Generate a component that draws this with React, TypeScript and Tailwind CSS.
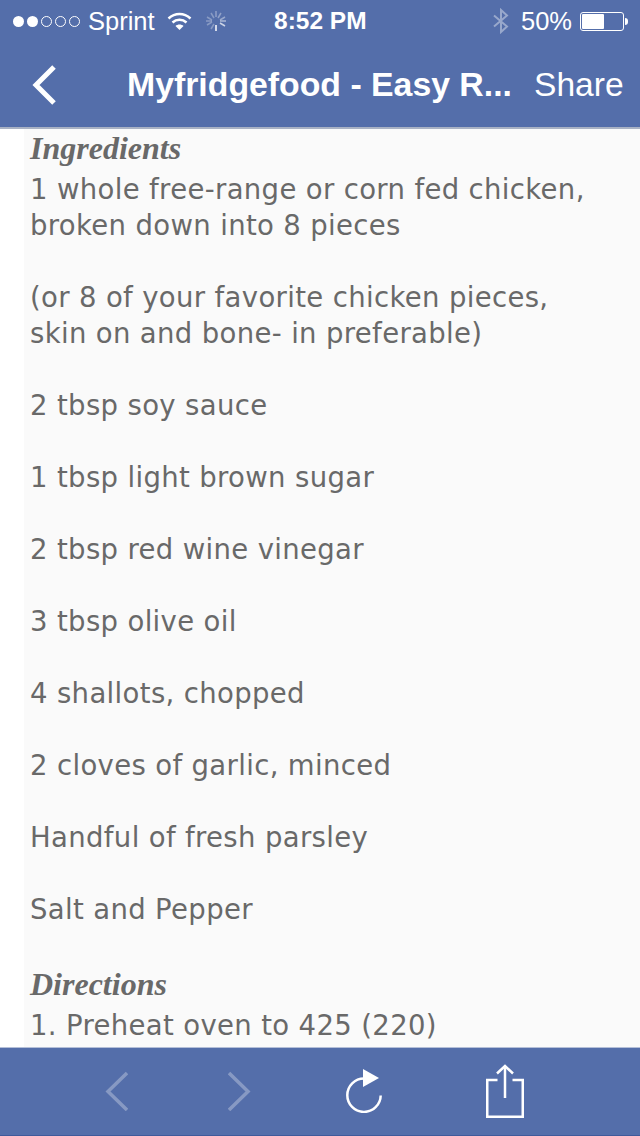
import type { ReactNode } from 'react'

const ingredients = [
  ['1 whole free-range or corn fed chicken,', 'broken down into 8 pieces'],
  ['(or 8 of your favorite chicken pieces,', 'skin on and bone- in preferable)'],
  ['2 tbsp soy sauce'],
  ['1 tbsp light brown sugar'],
  ['2 tbsp red wine vinegar'],
  ['3 tbsp olive oil'],
  ['4 shallots, chopped'],
  ['2 cloves of garlic, minced'],
  ['Handful of fresh parsley'],
  ['Salt and Pepper'],
]

function StatusBar() {
  return (
    <div className="h-10 flex items-center pt-[2px] pl-[13px] text-white text-[25.5px] font-['Liberation_Sans',sans-serif]">
      <div className="flex items-center w-[261px]">
        <div className="flex items-center gap-[3px]">
          <span className="w-[11px] h-[11px] rounded-full bg-white" />
          <span className="w-[11px] h-[11px] rounded-full bg-white" />
          <span className="w-[11px] h-[11px] rounded-full border border-white" />
          <span className="w-[11px] h-[11px] rounded-full border border-white" />
          <span className="w-[11px] h-[11px] rounded-full border border-white" />
        </div>
        <span className="ml-[8px]">Sprint</span>
        <svg className="ml-[12px]" width="25" height="20" viewBox="0 0 25 20" fill="none" stroke="white" strokeWidth="2.5">
          <path d="M1.5 7.5C8 1.5 17 1.5 23.5 7.5" />
          <path d="M5.5 11.5C9.5 7.8 15.5 7.8 19.5 11.5" />
          <path d="M12.5 19L8.5 15C10.5 13 14.5 13 16.5 15Z" fill="white" stroke="none" />
        </svg>
        <svg className="ml-[13px]" width="22" height="22" viewBox="0 0 22 22" stroke="white" strokeWidth="1.5">
          <path d="M11 1v6" opacity="0.35" />
          <path d="M16 3l-3 5" opacity="0.35" />
          <path d="M20 7l-5 3" opacity="0.4" />
          <path d="M21 11h-6" opacity="0.5" />
          <path d="M20 16l-5-3" opacity="0.7" />
          <path d="M11 21v-6" opacity="1" />
          <path d="M6 19l3-5" opacity="0.3" />
          <path d="M2 15l5-3" opacity="0.3" />
          <path d="M1 11h6" opacity="0.3" />
          <path d="M2 7l5 3" opacity="0.3" />
          <path d="M6 3l3 5" opacity="0.3" />
        </svg>
      </div>
      <span className="text-[24.5px] font-bold whitespace-nowrap">8:52 PM</span>
      <div className="flex-1 flex items-center justify-end pr-[12px]">
        <svg width="16" height="26" viewBox="0 0 16 26" fill="none" stroke="white" strokeOpacity="0.4" strokeWidth="2">
          <path d="M1 7.5L14 18.5L8 24V2L14 7.5L1 18.5" />
        </svg>
        <span className="ml-[12px]">50%</span>
        <div className="ml-[8px] w-[44px] h-[19px] rounded-[3px] border border-white p-[1px]">
          <div className="h-full w-[22px] bg-white rounded-[1px]" />
        </div>
        <div className="ml-[1px] w-[3px] h-[7px] bg-white rounded-r-sm" />
      </div>
    </div>
  )
}

function NavBar() {
  return (
    <div className="h-[87px] pt-[2px] flex items-center text-white text-[33.6px] font-['Liberation_Sans',sans-serif]">
      <div className="w-[127px] pl-[32px] flex items-center">
        <svg width="24" height="40" viewBox="0 0 24 40" fill="none" stroke="white" strokeWidth="5">
          <path d="M22 2L4 20L22 38" />
        </svg>
      </div>
      <span className="font-bold whitespace-nowrap w-[407px] text-[33.8px]">Myfridgefood - Easy R...</span>
      <span className="pt-[1px]">Share</span>
    </div>
  )
}

function Heading({ children, className }: { children: ReactNode; className: string }) {
  return (
    <h2 className={`font-['Liberation_Serif',serif] italic font-bold text-[32px] leading-[36px] tracking-normal ${className}`}>
      {children}
    </h2>
  )
}

function Toolbar() {
  return (
    <div className="h-[89px] bg-[#546eaa] border-t border-t-[#b4bfd8] border-b border-b-[#3f5a9b] flex items-center shrink-0">
      <div className="flex items-center pl-[104px] pb-[1px]">
        <svg width="24" height="40" viewBox="0 0 24 40" fill="none" stroke="white" strokeOpacity="0.3" strokeWidth="3.5">
          <path d="M23 2L4 20.5L23 39" />
        </svg>
        <svg className="ml-[100px]" width="24" height="40" viewBox="0 0 24 40" fill="none" stroke="white" strokeOpacity="0.3" strokeWidth="3.5">
          <path d="M1 2L20 20.5L1 39" />
        </svg>
        <svg className="ml-[94px]" width="36" height="44" viewBox="0 0 36 44" fill="none">
          <path d="M18 9.5A16.7 16.7 0 1 0 34.7 26.5" stroke="white" strokeWidth="2.5" />
          <path d="M17 0L33 9L17 18Z" fill="white" />
        </svg>
        <svg className="ml-[104px]" width="38" height="54" viewBox="0 0 38 54" fill="none" stroke="white" strokeWidth="2.5">
          <path d="M11.5 16H1.25V52.75H36.75V16H26.5" />
          <path d="M19 34V2" />
          <path d="M11 9.5L19 2L27 9.5" />
        </svg>
      </div>
    </div>
  )
}

export default function App() {
  return (
    <div className="w-[640px] h-[1136px] flex flex-col overflow-hidden bg-white">
      <div className="bg-[#546eaa] border-b-2 border-[#a9b2c4] shrink-0">
        <StatusBar />
        <NavBar />
      </div>
      <div className="flex-1 overflow-hidden">
        <div className="ml-[24px] h-full bg-[#fafafa] pl-[6px] text-[#696969] text-[27.5px] tracking-[0.35px] leading-[36px] font-['DejaVu_Sans',sans-serif]">
          <Heading className="pt-[1px] pb-[5px]">Ingredients</Heading>
          {ingredients.map((lines) => (
            <p key={lines[0]} className="mb-[36px]">
              {lines.map((line) => (
                <span key={line} className="block whitespace-nowrap">{line}</span>
              ))}
            </p>
          ))}
          <Heading className="pt-[3px] pb-[5px]">Directions</Heading>
          <p className="whitespace-nowrap">1. Preheat oven to 425 (220)</p>
        </div>
      </div>
      <Toolbar />
    </div>
  )
}
